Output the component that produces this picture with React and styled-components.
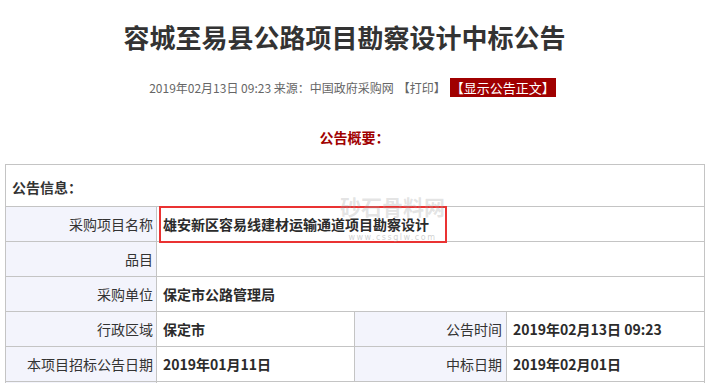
import React from 'react'
import styled, { createGlobalStyle } from 'styled-components'

const GlobalStyle = createGlobalStyle`
  body {
    margin: 0;
    background: #fff;
    font-family: "Microsoft YaHei", "Noto Sans CJK SC", "Noto Sans", sans-serif;
  }
`

const Page = styled.div`
  width: 709px;
  padding-top: 20px;
`

const Title = styled.h1`
  margin: 0;
  padding-right: 20px;
  font-size: 26px;
  line-height: 34px;
  font-weight: bold;
  color: #333;
  text-align: center;
`

const Meta = styled.div`
  margin-top: 24px;
  display: flex;
  justify-content: center;
  align-items: center;
  gap: 4px;
  font-size: 12px;
  line-height: 19px;
  color: #666;
  padding-right: 4px;
`

const ShowBody = styled.span`
  background: #a00000;
  color: #fff;
  font-size: 13px;
  padding: 0 1px;
`

const Summary = styled.div`
  margin-top: 30px;
  text-align: center;
  font-size: 14px;
  line-height: 20px;
  font-weight: bold;
  color: #a00000;
`

const Table = styled.table`
  margin: 17px 0 0 5px;
  width: 700px;
  border-collapse: collapse;
  table-layout: fixed;
  font-size: 14px;
  color: #333;
  td {
    border: 1px solid #c4c4c4;
    height: 34px;
    padding: 0;
    white-space: nowrap;
  }
`

const HeadCell = styled.td`
  && {
    height: 39px;
  }
  padding-left: 6px !important;
  font-weight: bold;
  padding-top: 2px !important;
`

const Label = styled.td`
  background: #f3f4fc;
  text-align: right;
  padding-right: ${p => p.$pr || 3}px !important;
`

const Value = styled.td`
  font-weight: bold;
  padding-left: 6px !important;
  color: #2b2b2b;
  position: relative;
`

const Marked = styled.span`
  position: relative;
  &::after {
    content: '';
    position: absolute;
    left: -4px;
    right: -18px;
    top: -8px;
    bottom: -9px;
    border: 2px solid #ea3232;
  }
`

const Watermark = styled.div`
  position: absolute;
  left: 183px;
  top: -13px;
  color: rgba(160, 160, 160, 0.3);
  font-weight: bold;
  pointer-events: none;
  text-align: center;
  span {
    display: block;
    font-size: 21px;
    line-height: 24px;
  }
  small {
    display: block;
    font-family: "DejaVu Sans", sans-serif;
    font-size: 8px;
    line-height: 10px;
    margin-top: 15px;
    font-weight: normal;
    letter-spacing: 1.5px;
    color: rgba(150, 150, 150, 0.45);
  }
`

const rows = [
  { label: '采购单位', value: '保定市公路管理局' },
]

export default function App() {
  return (
    <Page>
      <GlobalStyle />
      <Title>容城至易县公路项目勘察设计中标公告</Title>
      <Meta>
        <span>2019年02月13日 09:23 来源：中国政府采购网</span>
        <span>【打印】</span>
        <ShowBody>【显示公告正文】</ShowBody>
      </Meta>
      <Summary>公告概要：</Summary>
      <Table>
        <colgroup>
          <col style={{ width: 151 }} />
          <col style={{ width: 198 }} />
          <col style={{ width: 152 }} />
          <col style={{ width: 198 }} />
        </colgroup>
        <tbody>
          <tr>
            <HeadCell colSpan={4}>公告信息：</HeadCell>
          </tr>
          <tr>
            <Label>采购项目名称</Label>
            <Value colSpan={3}>
              <Marked>雄安新区容易线建材运输通道项目勘察设计</Marked>
              <Watermark>
                <span>砂石骨料网</span>
                <small>www.cssglw.com</small>
              </Watermark>
            </Value>
          </tr>
          <tr>
            <Label>品目</Label>
            <Value colSpan={3}></Value>
          </tr>
          {rows.map(r => (
            <tr key={r.label}>
              <Label>{r.label}</Label>
              <Value colSpan={3}>{r.value}</Value>
            </tr>
          ))}
          <tr>
            <Label>行政区域</Label>
            <Value>保定市</Value>
            <Label $pr={4}>公告时间</Label>
            <Value>2019年02月13日 09:23</Value>
          </tr>
          <tr>
            <Label>本项目招标公告日期</Label>
            <Value>2019年01月11日</Value>
            <Label $pr={4}>中标日期</Label>
            <Value>2019年02月01日</Value>
          </tr>
          <tr>
            <Label></Label>
            <Value colSpan={3}></Value>
          </tr>
        </tbody>
      </Table>
    </Page>
  )
}
